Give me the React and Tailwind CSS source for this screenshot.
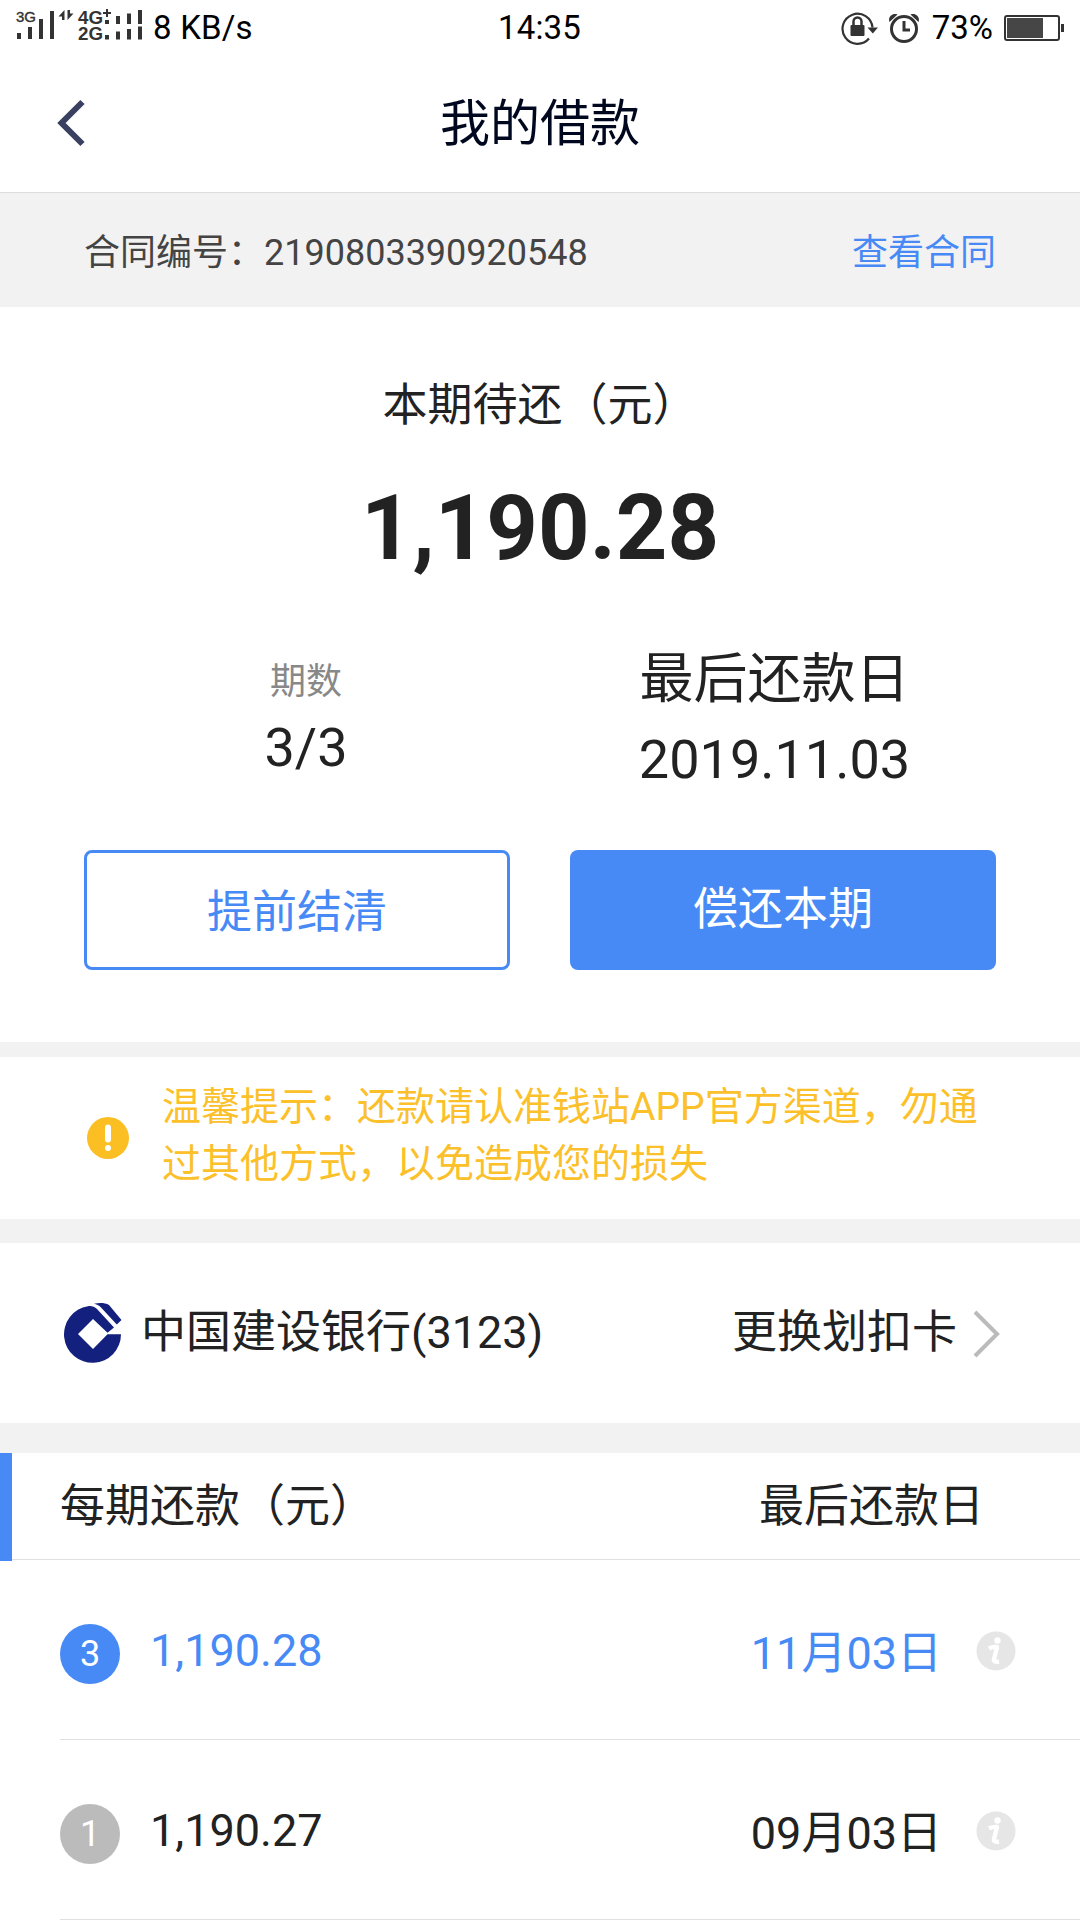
import React from "react";

const periods = [
  { no: 3, amount: "1,190.28", date: "11月03日", active: true },
  { no: 1, amount: "1,190.27", date: "09月03日", active: false },
];

const SignalIcon = () => (
  <svg width="132" height="60" viewBox="0 0 132 60" fill="#333">
    <g fontFamily="Liberation Sans, Arial, sans-serif" fontWeight="bold">
      <text x="2" y="24" fontSize="15" fontWeight="normal" stroke="#333" strokeWidth=".4" textLength="20" lengthAdjust="spacingAndGlyphs">3G</text>
      <text x="64" y="26" fontSize="17.5" textLength="25" lengthAdjust="spacingAndGlyphs">4G</text>
      <text x="64" y="42" fontSize="17.5" textLength="25" lengthAdjust="spacingAndGlyphs">2G</text>
    </g>
    <path d="M3 35h4v6h-4zM14 29h4v12h-4zM25 21h4v20h-4zM36 13h4v28h-4z" />
    <path d="M50.500 12v10h-2.500v-3.500h-3.500zM53.500 22v-10h2.500v3.500h3.500z" />
    <path d="M92 11h2v3h3v2h-3v3h-2v-3h-3v-2h3z" />
    <path d="M91 22h4v4h-4zM102 18h4v8h-4zM113 15.500h4v10.500h-4zM124 12h4v14h-4z" />
    <path d="M91 37h4v4.500h-4zM102 33.500h4v8h-4zM113 31h4v10.500h-4zM124 28.500h4v13h-4z" />
  </svg>
);

const RotationLockIcon = () => (
  <svg width="38" height="36" viewBox="0 0 38 36" fill="none" stroke="#333">
    <path d="M28 28.500A15 15 0 1 1 31.500 17.500" strokeWidth="2.200" />
    <path d="M26.500 17.500h10.500l-5.200 6z" fill="#333" stroke="none" />
    <path d="M12.500 16v-4.500a4 4 0 0 1 8 0v4.500" strokeWidth="2.500" />
    <rect x="9.500" y="15" width="14" height="11" rx="1" fill="#333" stroke="none" />
  </svg>
);

const AlarmIcon = () => (
  <svg width="32" height="36" viewBox="0 0 32 36" fill="none" stroke="#333">
    <circle cx="16" cy="19" r="12.500" strokeWidth="3" />
    <path d="M16 11v9h6" strokeWidth="3" />
    <path d="M1.500 12c-2-5 3-9.500 8-7.500zM30.500 12c2-5-3-9.500-8-7.500z" fill="#333" stroke="none" />
  </svg>
);

const BatteryIcon = () => (
  <svg width="61" height="28" viewBox="0 0 61 28">
    <rect x="1" y="2" width="54" height="24" rx="2" fill="none" stroke="#333" strokeWidth="2" />
    <rect x="3" y="4" width="36" height="20" fill="#464646" />
    <path d="M57 10h3v8h-3z" fill="#333" />
  </svg>
);

const BankLogo = () => (
  <svg width="58" height="60" viewBox="0 0 58 60" className="shrink-0">
    <path
      d="M57 31.300H43.500L29 46 14 31 29 16 43.500 29.700 50 24.500 33 6C30.500 3.500 27 2.500 24 3.200A28.500 28.500 0 1 0 57 31.300z"
      fill="#14207e"
    />
    <path d="M30 .8C35 -.3 41 -.3 45 2L57.500 17 52.800 21.500 37 4.500C35 2.500 32.500 1.200 30 .8z" fill="#14207e" />
  </svg>
);

const InfoIcon = () => (
  <svg width="40" height="40" viewBox="0 0 40 40" className="mt-[3px]">
    <circle cx="20" cy="20" r="19.500" fill="#e6e6e6" />
    <circle cx="21.500" cy="9.500" r="3.200" fill="#fff" />
    <path d="M13 17.500q4-2 8-1.500l-3 12q-.8 3.500 5 2.500" fill="none" stroke="#fff" strokeWidth="4.400" strokeLinejoin="round" />
  </svg>
);

const App = () => {
  return (
    <div
      lang="zh-CN"
      className="w-[1080px] h-[1920px] overflow-hidden bg-white text-[#222] font-['Roboto','Noto_Sans_CJK_SC',sans-serif]"
    >
      {/* Status bar */}
      <div className="grid grid-cols-[1fr_auto_1fr] items-center h-[56px] pl-[14px] pr-[15px] text-[33px] text-black">
        <div className="flex items-center h-[56px]">
          <SignalIcon />
          <span className="ml-[7px] tracking-[0.2px]">8 KB/s</span>
        </div>
        <span className="tracking-[0.2px]">14:35</span>
        <div className="flex items-center justify-end">
          <RotationLockIcon />
          <span className="w-[9px]" />
          <AlarmIcon />
          <span className="ml-[12px] mr-[11px]">73%</span>
          <BatteryIcon />
        </div>
      </div>

      {/* Header */}
      <div className="grid grid-cols-[1fr_auto_1fr] items-center h-[137px] px-[57px] border-b border-[#dcdcdc]">
        <svg width="30" height="48" viewBox="0 0 30 48" fill="none" stroke="#3a4060" strokeWidth="6" className="-mt-[3px]">
          <path d="M25.500 3 4.500 24l21 21" />
        </svg>
        <h1 className="-mt-px text-[50px] leading-[60px] text-[#00081f]">我的借款</h1>
      </div>

      {/* Contract number */}
      <div className="flex items-center justify-between h-[114px] px-[84px] pt-[6px] bg-[#f2f2f2] text-[36px] text-[#444]">
        <span>合同编号：2190803390920548</span>
        <a className="text-[#488af5]">查看合同</a>
      </div>

      {/* Current bill */}
      <div className="h-[735px] px-[84px] pt-[69px]">
        <div className="text-center text-[45px] leading-[60px]">本期待还（元）</div>
        <div className="mt-[43px] text-center text-[90px] leading-[100px] font-bold">1,190.28</div>
        <div className="flex mt-[69px] h-[146px] text-center">
          <div className="w-[444px]">
            <div className="mt-[12px] text-[36px] leading-[44px] text-[#888]">期数</div>
            <div className="mt-[12px] text-[54px] leading-[64px]">3/3</div>
          </div>
          <div className="flex-1 pl-[25px]">
            <div className="text-[54px] leading-[64px]">最后还款日</div>
            <div className="mt-[16px] text-[54px] leading-[64px]">2019.11.03</div>
          </div>
        </div>
        <div className="flex justify-between mt-[56px]">
          <button className="w-[426px] h-[120px] pt-[6px] border-[3px] border-[#488af5] rounded-lg text-[45px] text-[#488af5]">
            提前结清
          </button>
          <button className="w-[426px] h-[120px] rounded-lg bg-[#488af5] text-[45px] text-white">偿还本期</button>
        </div>
      </div>

      {/* Notice */}
      <div className="flex items-center h-[177px] px-[87px] border-t-[15px] border-[#f2f2f2] text-[39px] leading-[57px] text-[#fbc02a]">
        <svg width="42" height="42" viewBox="0 0 42 42" className="shrink-0">
          <circle cx="21" cy="21" r="21" fill="#fbbf24" />
          <path d="M21 10.500v12" stroke="#fff" strokeWidth="6" strokeLinecap="round" />
          <circle cx="21" cy="31" r="3" fill="#fff" />
        </svg>
        <p className="ml-[33px] -mt-[4px] whitespace-nowrap">
          温馨提示：还款请认准钱站APP官方渠道，勿通
          <br />
          过其他方式，以免造成您的损失
        </p>
      </div>

      {/* Bank card */}
      <div className="flex items-center h-[204px] pl-[64px] pr-[79px] border-t-[24px] border-[#f2f2f2] text-[45px]">
        <BankLogo />
        <span className="ml-[19px]">中国建设银行(3123)</span>
        <span className="ml-auto">更换划扣卡</span>
        <svg width="28" height="48" viewBox="0 0 28 48" fill="none" stroke="#bbb" strokeWidth="4" className="mt-[2px] ml-[16px]">
          <path d="M2 2l22 22L2 46" />
        </svg>
      </div>

      {/* Repayment plan */}
      <div className="h-[30px] bg-[#f2f2f2]" />
      <div className="flex h-[107px] text-[45px]">
        <div className="w-[12px] h-[108px] bg-[#488af5]" />
        <div className="flex flex-1 items-center justify-between pt-[2px] pl-[48px] pr-[96px] border-b border-[#e0e0e0]">
          <span>每期还款（元）</span>
          <span>最后还款日</span>
        </div>
      </div>
      {periods.map((p) => (
        <div
          key={p.no}
          className={`flex items-center h-[180px] ml-[60px] pr-[64px] border-b border-[#e0e0e0] text-[45px] ${
            p.active ? "text-[#488af5]" : "text-[#222]"
          }`}
        >
          <span
            className={`flex items-center justify-center w-[60px] h-[60px] mt-[8px] rounded-full text-[36px] text-white ${
              p.active ? "bg-[#488af5]" : "bg-[#bbb]"
            }`}
          >
            {p.no}
          </span>
          <span className="mt-[2px] ml-[30px]">{p.amount}</span>
          <span className="mt-[8px] ml-auto mr-[34px]">{p.date}</span>
          <InfoIcon />
        </div>
      ))}
    </div>
  );
};

export default App;
